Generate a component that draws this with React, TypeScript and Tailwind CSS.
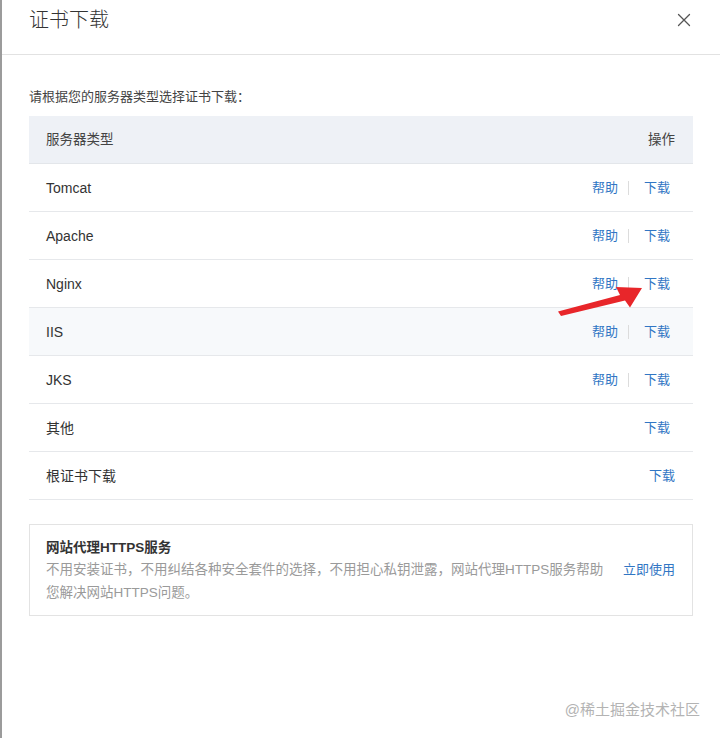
import React from 'react';

const rows = [
  { name: 'Tomcat', help: true },
  { name: 'Apache', help: true },
  { name: 'Nginx', help: true },
  { name: 'IIS', help: true, hover: true },
  { name: 'JKS', help: true },
  { name: '其他', help: false },
  { name: '根证书下载', help: false, root: true },
];

const font = { fontFamily: '"Liberation Sans", "Noto Sans CJK SC", sans-serif' };

function CloseIcon() {
  return (
    <svg width="14" height="14" viewBox="0 0 14 14" fill="none">
      <path d="M1.5 1.5 L12.5 12.5 M12.5 1.5 L1.5 12.5" stroke="#555" strokeWidth="1.3" strokeLinecap="round" />
    </svg>
  );
}

export default function App() {
  return (
    <div className="relative w-[720px] h-[738px] bg-white border-l-2 border-[#9b9b9b] text-[#333]" style={font}>
      {/* header */}
      <div className="h-[55px] flex items-start justify-between pl-[27px] pr-[29px] pt-[8px] border-b border-[#e2e2e2]">
        <h1 className="text-[20px] leading-[24px] font-light text-[#333]">证书下载</h1>
        <button className="mt-[5px]">
          <CloseIcon />
        </button>
      </div>

      <div className="px-[27px]">
        <p className="pt-[32px] text-[13px] leading-[20px] text-[#444]">请根据您的服务器类型选择证书下载：</p>

        {/* table */}
        <div className="mt-[9px]">
          <div className="h-[48px] flex items-center justify-between bg-[#eef1f6] border-b border-[#e3e6ea] pl-[17px] pr-[18px] pt-[1px] text-[13.5px] text-[#444]">
            <span>服务器类型</span>
            <span>操作</span>
          </div>
          {rows.map((r) => (
            <div
              key={r.name}
              className={`h-[48px] flex items-center justify-between border-b border-[#e6e8eb] pl-[17px] pt-[1px] ${
                r.hover ? 'bg-[#f7f9fb]' : 'bg-white'
              } ${r.root ? 'pr-[18px]' : 'pr-[23px]'}`}
            >
              <span className="text-[14px] text-[#333]">{r.name}</span>
              <div className="flex items-center text-[13px] text-[#3176c4]">
                {r.help && (
                  <>
                    <a className="cursor-pointer">帮助</a>
                    <span className="w-px h-[14px] bg-[#dcdcdc] ml-[10px] mr-[15px]" />
                  </>
                )}
                <a className="cursor-pointer">下载</a>
              </div>
            </div>
          ))}
        </div>

        {/* https card */}
        <div className="mt-[24px] border border-[#e3e3e3] pl-[16px] pr-[17px] pt-[13px] pb-[11px]">
          <h3 className="text-[13.5px] leading-[20px] font-bold text-[#333]">网站代理HTTPS服务</h3>
          <div className="flex items-start justify-between">
            <p className="w-[560px] text-[13.5px] leading-[23px] text-[#9a9a9a]">
              不用安装证书，不用纠结各种安全套件的选择，不用担心私钥泄露，网站代理HTTPS服务帮助您解决网站HTTPS问题。
            </p>
            <a className="text-[13px] leading-[23px] text-[#3176c4] cursor-pointer">立即使用</a>
          </div>
        </div>
      </div>

      {/* watermark */}
      <div className="absolute right-[20px] top-[699px] text-[15px] leading-[22px] text-[#b3b3b3]">@稀土掘金技术社区</div>

      {/* red annotation arrow */}
      <svg className="absolute left-[-2px] top-0 pointer-events-none" width="720" height="738" viewBox="0 0 720 738">
        <path d="M558 311.5 L620 295 L616 287 L642 288 L630 307.5 L625 300.5 L561 316 Z" fill="#e8262a" />
      </svg>
    </div>
  );
}
